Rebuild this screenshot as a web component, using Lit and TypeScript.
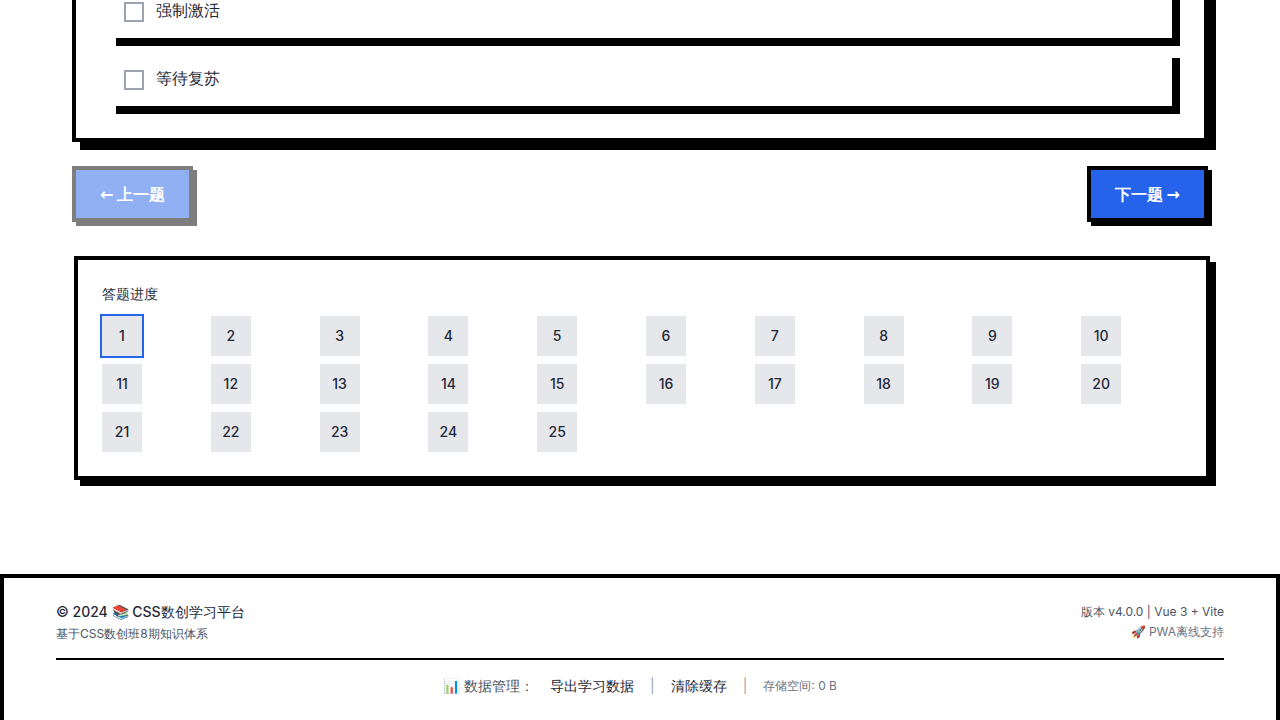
import { LitElement, html, css } from "lit";
import { customElement, property, state } from "lit/decorators.js";
import { classMap } from "lit/directives/class-map.js";

const OPTIONS = ["强制激活", "等待复苏"];
const TOTAL = 25;

@customElement("quiz-panel")
class QuizPanel extends LitElement {
  @property({ type: Number }) current = 1;
  @state() private checked = new Set<string>();

  static styles = css`
    :host { display: block; }
    * { box-sizing: border-box; }
    button { font: inherit; cursor: pointer; }
    .card { background: #fff; border: 4px solid #000; box-shadow: 8px 8px 0 #000; }
    .question { padding: 32px; }
    .options { display: flex; flex-direction: column; gap: 12px; margin: 0; padding: 0; border: 0; min-width: 0; }
    .option {
      display: flex; align-items: flex-start; gap: 12px; padding: 16px;
      background: #fff; box-shadow: 8px 8px 0 #000; line-height: 24px; cursor: pointer;
    }
    .box {
      appearance: none; flex: none; width: 20px; height: 20px; margin: 4px 0 0;
      border: 2px solid #9ca3af; background: #fff;
    }
    .box:checked { background: #2563eb; border-color: #2563eb; }
    .nav { display: flex; justify-content: space-between; margin: 24px 0 32px; }
    .step {
      padding: 12px 24px; border: 4px solid #000; background: #2563eb; color: #fff;
      box-shadow: 4px 4px 0 #000; font-size: 16px; line-height: 24px; font-weight: 600;
    }
    .step:disabled { opacity: 0.5; cursor: not-allowed; }
    .arrow { font-family: "DejaVu Sans", sans-serif; line-height: 1; }
    .progress { padding: 24px; }
    .pressed { transform: translate(2px, 2px); box-shadow: 6px 6px 0 #000; }
    .title { margin: 0 0 12px; font-size: 14px; line-height: 20px; font-weight: 500; }
    .grid { display: grid; grid-template-columns: repeat(10, minmax(0, 1fr)); gap: 8px; }
    .cell {
      width: 40px; height: 40px; padding: 0; border: 0; background: #e5e7eb; color: #1f2937;
      font-size: 14px; line-height: 20px; font-weight: 500;
    }
    .cell.active { box-shadow: 0 0 0 2px #2563eb; }
  `;

  private toggle(name: string) {
    const next = new Set(this.checked);
    next.has(name) ? next.delete(name) : next.add(name);
    this.checked = next;
  }

  render() {
    return html`
      <section class="card question">
        <fieldset class="options">
          ${OPTIONS.map(
            (name) => html`<label class="option">
              <input class="box" type="checkbox" .checked=${this.checked.has(name)} @change=${() => this.toggle(name)} />
              <span>${name}</span>
            </label>`
          )}
        </fieldset>
      </section>
      <nav class="nav">
        <button class="step" ?disabled=${this.current === 1} @click=${() => this.current--}><span class="arrow">←</span> 上一题</button>
        <button class="step" ?disabled=${this.current === TOTAL} @click=${() => this.current++}>下一题 <span class="arrow">→</span></button>
      </nav>
      <section class="card progress pressed">
        <h3 class="title">答题进度</h3>
        <div class="grid">
          ${Array.from({ length: TOTAL }, (_, i) => i + 1).map(
            (n) => html`<button
              class=${classMap({ cell: true, active: n === this.current })}
              @click=${() => (this.current = n)}
            >${n}</button>`
          )}
        </div>
      </section>
    `;
  }
}

@customElement("site-footer")
class SiteFooter extends LitElement {
  static styles = css`
    :host { display: block; }
    * { box-sizing: border-box; }
    footer { border: 4px solid #000; background: #fff; padding: 24px 0; }
    .inner { max-width: 1200px; margin: 0 auto; padding: 0 16px; }
    .row { display: flex; justify-content: space-between; align-items: center; }
    p { margin: 0; }
    .brand { font-size: 14px; line-height: 20px; font-weight: 500; }
    .small { font-size: 12px; line-height: 16px; color: #4b5563; }
    .light { color: #6b7280; }
    .stack { display: flex; flex-direction: column; gap: 4px; }
    .end { text-align: right; }
    .manage {
      display: flex; flex-wrap: wrap; justify-content: center; align-items: center; gap: 16px;
      margin-top: 16px; padding-top: 16px; border-top: 2px solid #000;
      font-size: 14px; line-height: 20px; color: #4b5563;
    }
    .action {
      padding: 0; border: 0; background: none; font: inherit; font-weight: 500;
      color: #1f2937; cursor: pointer;
    }
    .bar { color: #9ca3af; }
  `;

  render() {
    return html`
      <footer>
        <div class="inner">
          <div class="row">
            <div class="stack">
              <p class="brand">© 2024 📚 CSS数创学习平台</p>
              <p class="small">基于CSS数创班8期知识体系</p>
            </div>
            <div class="stack end">
              <p class="small">版本 v4.0.0 | Vue 3 + Vite</p>
              <p class="small light">🚀 PWA离线支持</p>
            </div>
          </div>
          <div class="manage">
            <span>📊 数据管理：</span>
            <button class="action">导出学习数据</button>
            <span class="bar">|</span>
            <button class="action">清除缓存</button>
            <span class="bar">|</span>
            <span class="small light">存储空间: 0 B</span>
          </div>
        </div>
      </footer>
    `;
  }
}

@customElement("app-root")
class AppRoot extends LitElement {
  static styles = css`
    :host {
      display: block; height: 100vh; overflow: hidden; background: #fff; color: #1f2937;
      font-family: Inter, sans-serif; font-size: 16px; line-height: 24px;
    }
    .main { max-width: 1200px; margin: -54px auto 0; padding: 0 32px 32px; box-sizing: border-box; }
    .foot { margin-top: 64px; }
  `;

  render() {
    return html`
      <main class="main"><quiz-panel></quiz-panel></main>
      <site-footer class="foot"></site-footer>
    `;
  }
}
